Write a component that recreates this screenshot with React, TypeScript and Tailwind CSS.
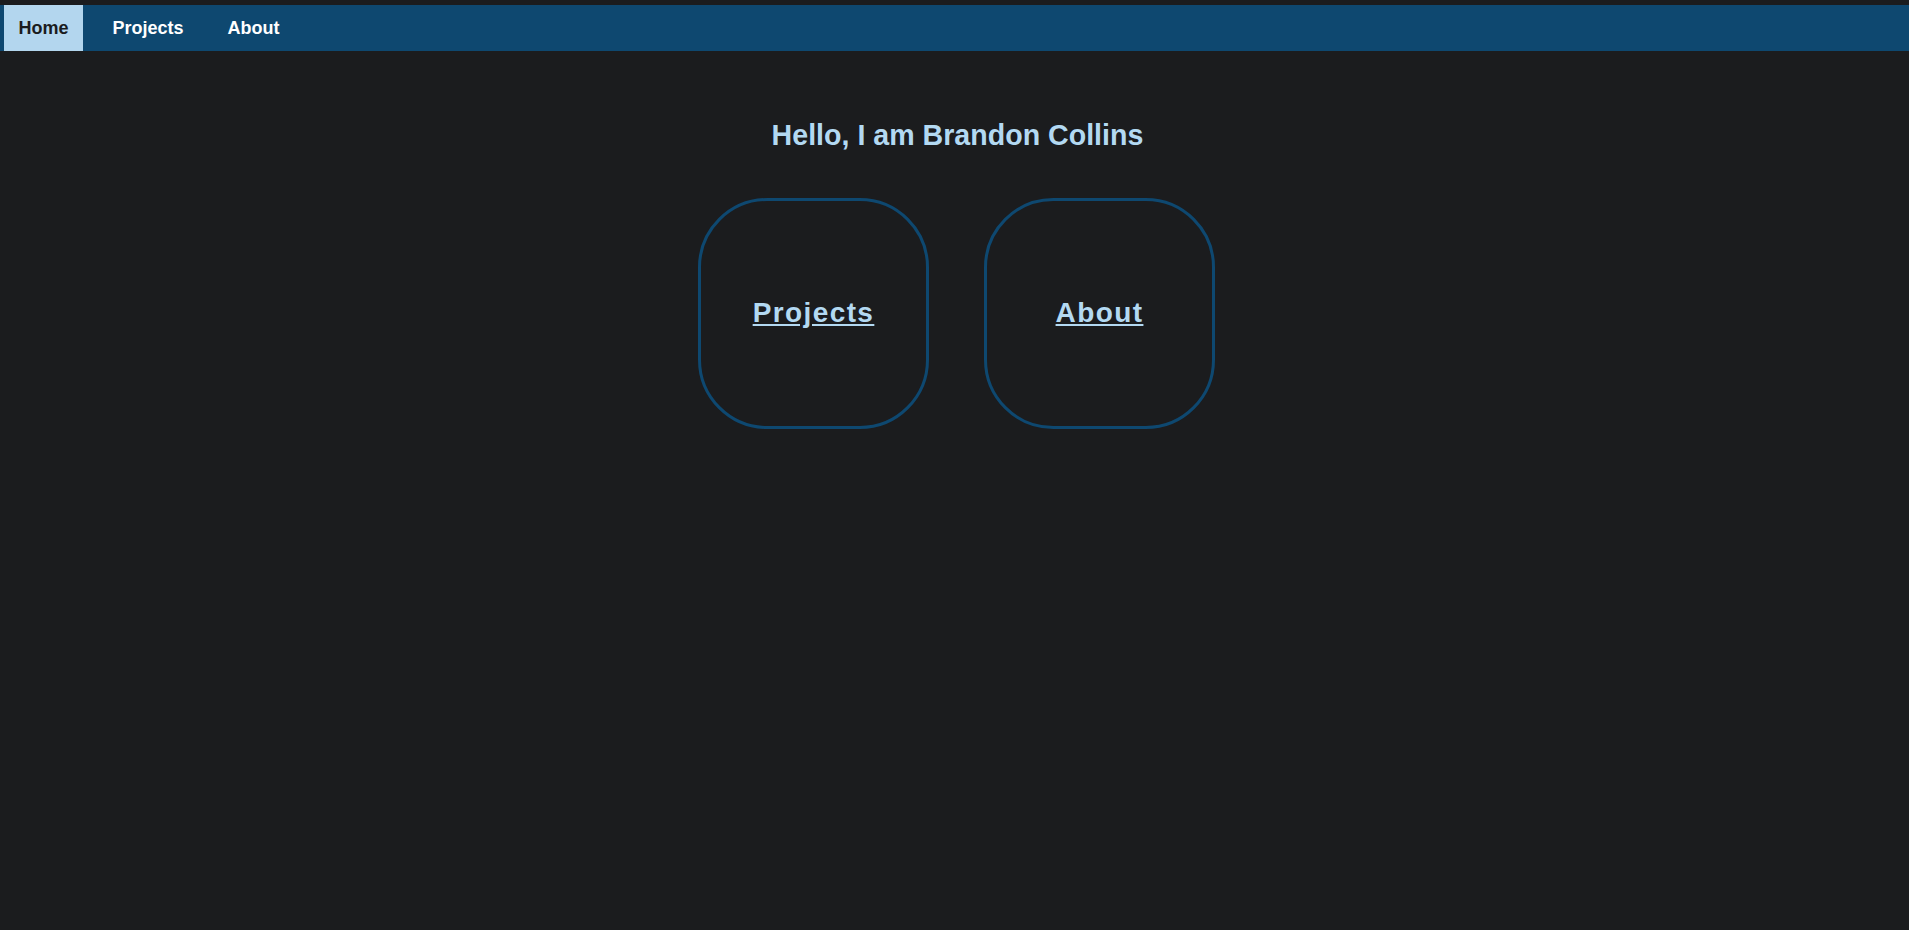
import React from "react";

export default function App() {
  const font = { fontFamily: '"Liberation Sans", Arial, sans-serif' };
  return (
    <div className="min-h-[930px] w-full bg-[#1b1c1e] pt-[5px]" style={font}>
      <nav className="flex h-[46px] items-stretch gap-[15px] bg-[#0e4870] pl-[4px]">
        <a className="flex items-center bg-[#b3d6ee] px-[14.5px] text-[18px] font-bold text-[#1b1c1e]">Home</a>
        <a className="flex items-center px-[14.5px] text-[18px] font-bold text-white">Projects</a>
        <a className="flex items-center px-[14.5px] text-[18px] font-bold text-white">About</a>
      </nav>
      <main className="flex flex-col items-center">
        <h1 className="ml-[6px] mt-[68px] text-[28.6px] font-bold leading-[33px] text-[#b3d9f2]">
          Hello, I am Brandon Collins
        </h1>
        <div className="ml-[4px] mt-[46px] flex gap-[55px]">
          <a className="flex h-[231px] w-[231px] items-center justify-center rounded-[30%] border-[3px] border-[#0e4870] pb-[2px]">
            <span className="text-[28px] font-bold leading-[32px] tracking-[1.4px] text-[#b3d9f2] underline">Projects</span>
          </a>
          <a className="flex h-[231px] w-[231px] items-center justify-center rounded-[30%] border-[3px] border-[#0e4870] pb-[2px]">
            <span className="text-[28px] font-bold leading-[32px] tracking-[1.4px] text-[#b3d9f2] underline">About</span>
          </a>
        </div>
      </main>
    </div>
  );
}
